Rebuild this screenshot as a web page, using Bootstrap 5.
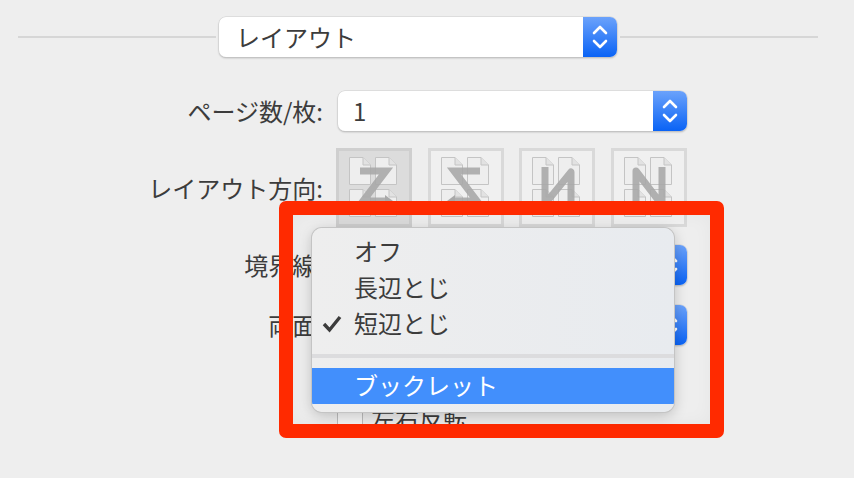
<!DOCTYPE html>
<html lang="ja">
<head>
  <meta charset="utf-8">
  <title>レイアウト</title>
  <link href="https://cdn.jsdelivr.net/npm/bootstrap@5.3.0/dist/css/bootstrap.min.css" rel="stylesheet">
  <style>
    html, body { height: 478px; overflow: hidden; }
    body { background: #eeeeee; color: #3c3c3c; font-family: "Noto Sans CJK JP", "Liberation Sans", sans-serif; font-size: 24px; line-height: 1; }
    .sheet { width: 854px; height: 478px; padding: 17px 36px 0 18px; }
    .rule { height: 2px; background: #d6d6d6; flex: 1; }
    .pop { height: 40px; background: #fff; border-radius: 7px; box-shadow: 0 0 0 .5px #d0d0d0, 0 1px 2px rgba(0,0,0,.3); }
    .pop-title { width: 398px; margin: 0 3px; }
    .pop-field { width: 349px; }
    .pop-text { flex: 1; padding-left: 17px; }
    .pop-field .pop-text { padding-left: 15px; }
    .stepper { width: 34px; height: 40px; border-radius: 0 7px 7px 0; background: linear-gradient(#6ba2fb, #0a63f5); }
    .stepper svg { display: block; margin: auto; }
    .tag { width: 305px; margin-right: 15px; text-align: right; }
    .first-row { margin-top: 34px; }
    .dir-row { margin-top: 17px; }
    .edge-row { margin-top: 18px; }
    .duplex-row { margin-top: 20px; }
    .flip-row { margin-top: 61px; margin-left: 319px; }
    .dir-set { width: 351px; margin-left: -2px; }
    .dir-btn { width: 76px; height: 79px; border: 3px solid #d9d9d9; background: #f0f0f0; padding: 0; border-radius: 0; }
    .dir-btn.on { background: #dcdcdc; border-color: #cfcfcf; }
    .dir-btn svg { display: block; margin: -3px; }
    .tick-box { width: 26px; height: 30px; border: 1px solid #bdbdbd; background: #f6f6f6; }
    .flip-label { margin-left: 8px; }
    .sheet-menu { position: absolute; left: 312px; top: 228px; width: 362px; height: 184px; min-width: 0; margin: 0; padding: 6px 0 0; display: block; border: 0; border-radius: 10px; background: linear-gradient(90deg, #eeeeee, #e8ebef); box-shadow: 0 0 0 1px #c4c4c4, 0 3px 14px rgba(0,0,0,.22); overflow: hidden; font-size: 24px; }
    .sheet-item { position: relative; height: 36px; line-height: 34px; padding: 0 0 0 42px; color: #3c3c3c; background: transparent; }
    .sheet-item.hit { background: #428ffc; color: #fff; }
    .sheet-check { position: absolute; left: 10px; top: 9px; }
    .sheet-sep { height: 4px; margin: 12px 0 10px; background: #dcdcde; opacity: 1; border: 0; }
    .red-frame { position: absolute; left: 279px; top: 201px; width: 445px; height: 237px; border: 14px solid #ff2a00; border-radius: 7px; box-shadow: inset 0 0 18px rgba(0,0,0,.04); pointer-events: none; }
  </style>
</head>
<body>
  <div class="sheet">
    <!-- title popup -->
    <div class="d-flex align-items-center">
      <div class="rule"></div>
      <div class="pop pop-title d-flex align-items-center">
        <div class="pop-text">レイアウト</div>
        <div class="stepper d-flex align-items-center"><svg width="18" height="28" viewBox="0 0 18 28" fill="none" stroke="#fff" stroke-width="2.6" stroke-linecap="round" stroke-linejoin="round"><path d="M3 10 9 4 15 10M3 18 9 24 15 18"/></svg></div>
      </div>
      <div class="rule"></div>
    </div>

    <div class="d-flex align-items-center first-row">
      <div class="tag">ページ数/枚:</div>
      <div class="pop pop-field d-flex align-items-center">
        <div class="pop-text">1</div>
        <div class="stepper d-flex align-items-center"><svg width="18" height="28" viewBox="0 0 18 28" fill="none" stroke="#fff" stroke-width="2.6" stroke-linecap="round" stroke-linejoin="round"><path d="M3 10 9 4 15 10M3 18 9 24 15 18"/></svg></div>
      </div>
    </div>

    <div class="d-flex align-items-center dir-row">
      <div class="tag">レイアウト方向:</div>
      <div class="dir-set d-flex justify-content-between">
        <button class="dir-btn on" type="button"><svg width="76" height="79" viewBox="0 0 76 79"><use href="#pages"/><path d="M24 23H50L27 53H50" fill="none" stroke="#a9a9a9" stroke-opacity=".9" stroke-width="7"/><path d="M49 47 57 53 49 59Z" fill="#a9a9a9"/></svg></button>
        <button class="dir-btn" type="button"><svg width="76" height="79" viewBox="0 0 76 79"><use href="#pages"/><path d="M52 23H26L49 53H26" fill="none" stroke="#a9a9a9" stroke-opacity=".9" stroke-width="7"/><path d="M27 47 19 53 27 59Z" fill="#a9a9a9"/></svg></button>
        <button class="dir-btn" type="button"><svg width="76" height="79" viewBox="0 0 76 79"><use href="#pages"/><path d="M26 19V56L52 24V62" fill="none" stroke="#a9a9a9" stroke-opacity=".9" stroke-width="7" stroke-linejoin="round"/></svg></button>
        <button class="dir-btn" type="button"><svg width="76" height="79" viewBox="0 0 76 79"><use href="#pages"/><path d="M25 62V23L51 57V19" fill="none" stroke="#a9a9a9" stroke-opacity=".9" stroke-width="7" stroke-linejoin="round"/></svg></button>
      </div>
    </div>

    <div class="d-flex align-items-center edge-row">
      <div class="tag">境界線:</div>
      <div class="pop pop-field d-flex align-items-center">
        <div class="pop-text"></div>
        <div class="stepper d-flex align-items-center"><svg width="18" height="28" viewBox="0 0 18 28" fill="none" stroke="#fff" stroke-width="2.6" stroke-linecap="round" stroke-linejoin="round"><path d="M3 10 9 4 15 10M3 18 9 24 15 18"/></svg></div>
      </div>
    </div>

    <div class="d-flex align-items-center duplex-row">
      <div class="tag">両面:</div>
      <div class="pop pop-field d-flex align-items-center">
        <div class="pop-text"></div>
        <div class="stepper d-flex align-items-center"><svg width="18" height="28" viewBox="0 0 18 28" fill="none" stroke="#fff" stroke-width="2.6" stroke-linecap="round" stroke-linejoin="round"><path d="M3 10 9 4 15 10M3 18 9 24 15 18"/></svg></div>
      </div>
    </div>

    <div class="d-flex align-items-start flip-row">
      <div class="tick-box"></div>
      <div class="flip-label">左右反転</div>
    </div>
  </div>

  <!-- shared page tiles for the layout direction buttons -->
  <svg width="0" height="0" class="position-absolute">
    <defs>
      <g id="onepage" fill="#eeeeee" stroke="#c4c4c4" stroke-width="1">
        <path d="M.5.5H14L21.5 8V27.5H.5Z"/><path d="M14 .5V8H21.5" fill="#e2e2e2"/>
      </g>
      <g id="pages">
        <use href="#onepage" x="13" y="9"/><use href="#onepage" x="39" y="9"/>
        <use href="#onepage" x="13" y="41"/><use href="#onepage" x="39" y="41"/>
      </g>
    </defs>
  </svg>

  <!-- open popup menu -->
  <div class="dropdown-menu sheet-menu">
    <div class="sheet-item">オフ</div>
    <div class="sheet-item">長辺とじ</div>
    <div class="sheet-item"><svg class="sheet-check" width="20" height="18" viewBox="0 0 20 18" fill="none" stroke="#3c3c3c" stroke-width="3.4"><path d="M2 9 7.5 15 18 2"/></svg>短辺とじ</div>
    <hr class="sheet-sep">
    <div class="sheet-item hit">ブックレット</div>
  </div>

  <!-- annotation rectangle -->
  <div class="red-frame"></div>
</body>
</html>
